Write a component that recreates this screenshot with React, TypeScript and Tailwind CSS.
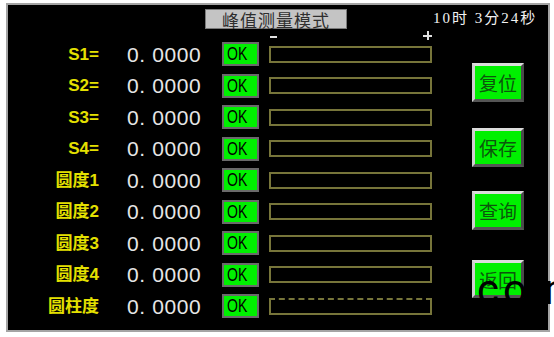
const rows = ['S1=', 'S2=', 'S3=', 'S4=', '圆度1', '圆度2', '圆度3', '圆度4', '圆柱度'];

const sideButtons = [
  { label: '复位', cls: 'mt-[21px] h-[39px]' },
  { label: '保存', cls: 'mt-[26px] h-[39px]' },
  { label: '查询', cls: 'mt-[24px] h-[39px]' },
  { label: '返回', cls: 'mt-[30px] h-[38px]' },
];

const App = () => {
  return (
    <div className="relative w-[554px] h-[337px] bg-white overflow-hidden">
      <div className="ml-[6px] mt-[3px] w-[544px] h-[329px] border-2 border-[#a4a4a4] bg-black flex flex-col">
        {/* header */}
        <div className="flex items-start h-[24px]">
          <div
            className="ml-[197px] mt-[4px] w-[142px] h-[20px] bg-[#c4c4c4] border border-[#7a7a7a] flex items-center justify-center text-[17px] leading-none text-[#2e2e2e] tracking-[1px]"
            style={{ fontFamily: '"Noto Sans CJK SC", sans-serif' }}
          >
            峰值测量模式
          </div>
          <div
            className="ml-[86px] mt-[6px] text-[15px] leading-none text-[#f2f2f2] whitespace-pre tracking-[2px]"
            style={{ fontFamily: '"Liberation Serif", "Noto Sans CJK SC", serif' }}
          >
            10时 3分24秒
          </div>
        </div>
        <div className="h-[13px] ml-[262px] w-[162px] flex justify-between items-center">
          <div className="w-[7px] h-[2px] bg-[#e0e0e0] mt-[2px]" />
          <div className="relative w-[9px] h-[9px]">
            <div className="absolute left-[4px] top-0 w-[1.5px] h-[9px] bg-[#e0e0e0]" />
            <div className="absolute left-0 top-[4px] w-[9px] h-[1.5px] bg-[#e0e0e0]" />
          </div>
        </div>

        {/* body */}
        <div className="flex">
          <div className="flex flex-col gap-[7.5px]">
            {rows.map((label, i) => (
              <div key={label} className="flex items-center h-[24px]">
                <div
                  className="w-[91px] text-right text-[#e4e000] text-[17px] leading-none font-bold"
                  style={{ fontFamily: '"Liberation Sans", "Noto Sans CJK SC", sans-serif' }}
                >
                  {label}
                </div>
                <div
                  className="ml-[28px] w-[95px] text-[#e6e6e6] text-[21px] leading-none tracking-[0.6px] whitespace-pre"
                  style={{ fontFamily: '"Liberation Sans", sans-serif' }}
                >
                  0. 0000
                </div>
                <div className="w-[37px] h-[24px] bg-[#00f000] border-2 border-[#6a6a6a] flex items-center pl-[3px]">
                  <span
                    className="inline-block text-black text-[18px] leading-none scale-x-[0.78] origin-left"
                    style={{ fontFamily: '"Liberation Sans", sans-serif' }}
                  >
                    OK
                  </span>
                </div>
                <div
                  className="ml-[10px] w-[163px] h-[17px] border-2 border-[#77753a]"
                  style={i === rows.length - 1 ? { borderTopStyle: 'dashed' } : undefined}
                />
              </div>
            ))}
          </div>

          <div className="ml-[40px] flex flex-col">
            {sideButtons.map((b) => (
              <div
                key={b.label}
                className={`${b.cls} w-[52px] bg-[#00f000] border-[3px] border-t-[#dcdcdc] border-l-[#cfcfcf] border-b-[#555555] border-r-[#4a4a4a] flex items-center justify-center text-[19px] leading-none text-[#0c560c]`}
                style={{ fontFamily: '"Noto Sans CJK SC", serif' }}
              >
                {b.label}
              </div>
            ))}
          </div>
        </div>
      </div>

      {/* watermark fragment over the page */}
      <div
        className="absolute left-[477px] top-[269px] flex text-[42px] leading-none text-black"
        style={{ fontFamily: 'Roboto, sans-serif' }}
      >
        <span>c</span>
        <span className="ml-[4px]">o</span>
        <span className="ml-[17px]">m</span>
      </div>
    </div>
  );
};

export default App;
